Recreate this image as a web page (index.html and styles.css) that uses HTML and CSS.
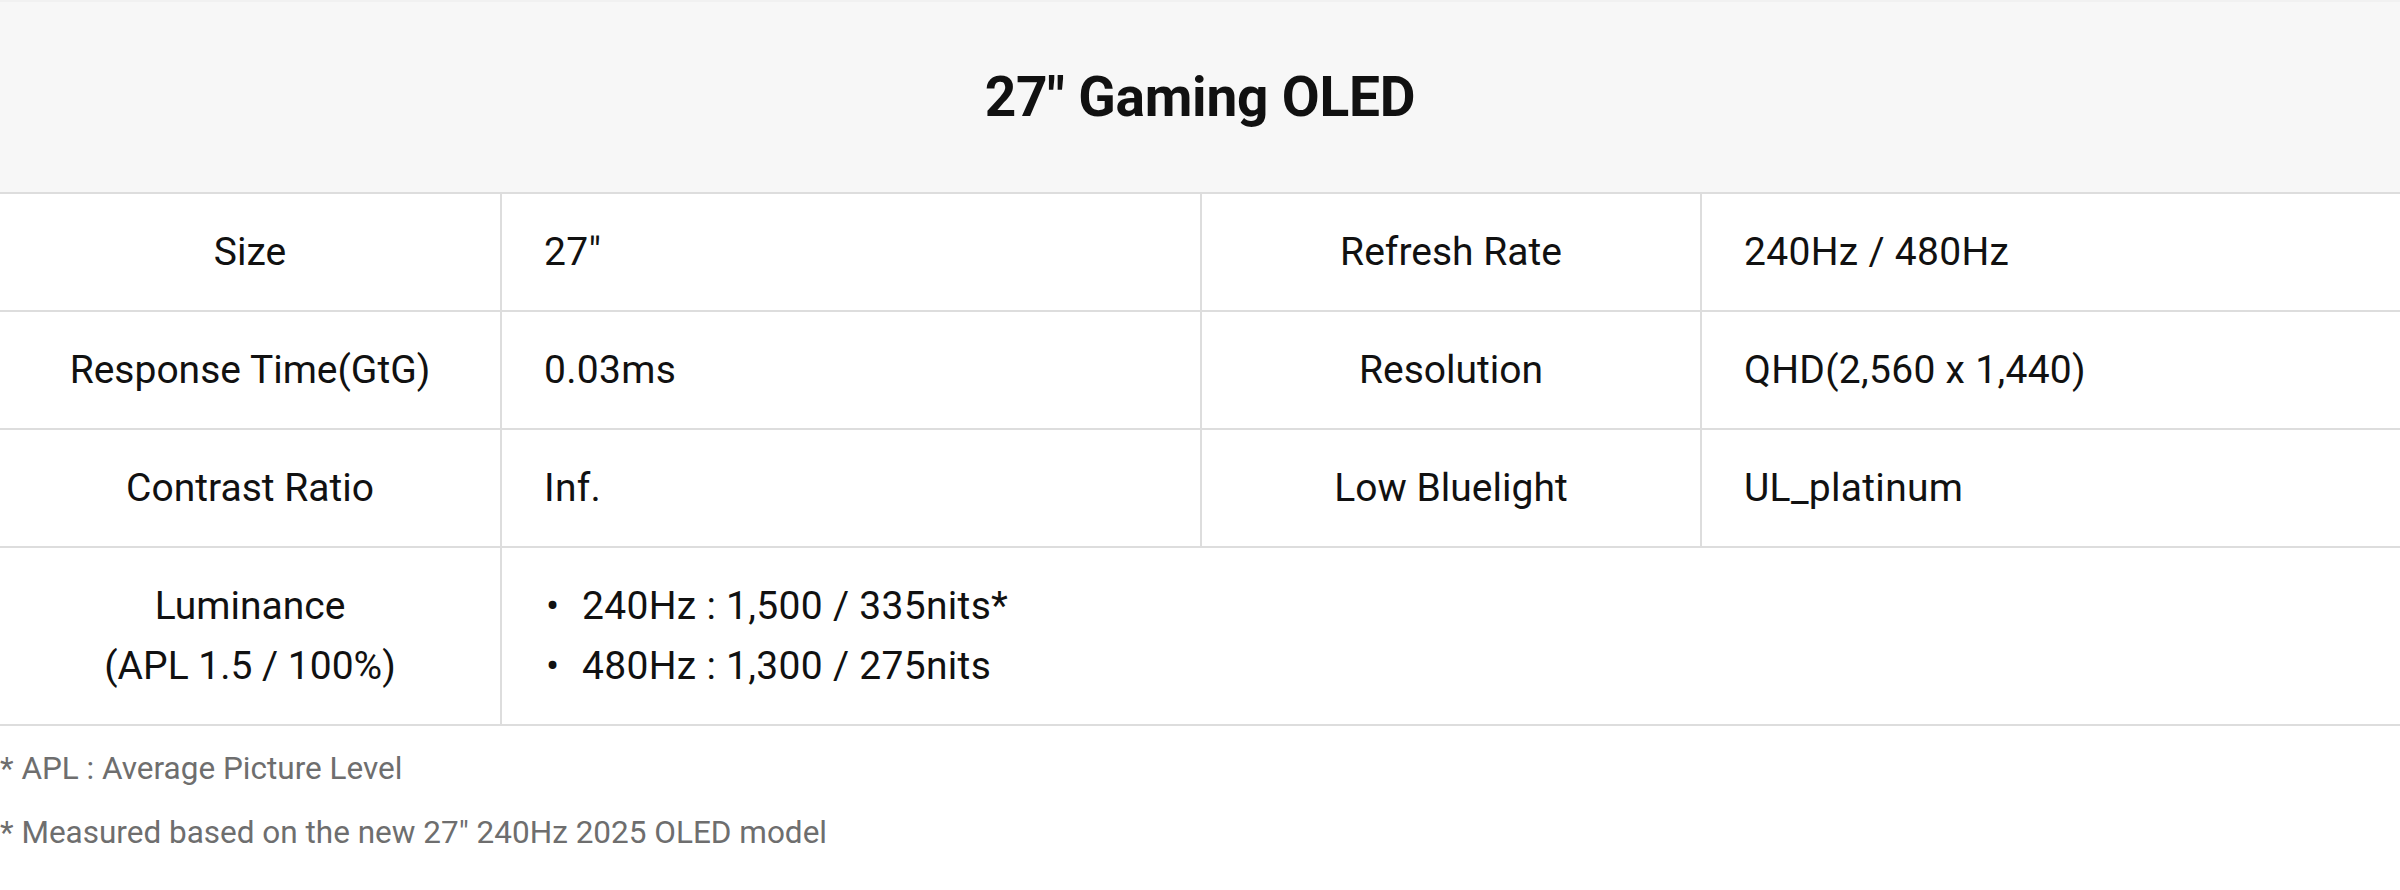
FILE: index.html
```html
<!DOCTYPE html>
<html lang="en">
<head>
<meta charset="utf-8">
<title>27" Gaming OLED</title>
<link rel="stylesheet" href="styles.css">
</head>
<body>
<div class="spec">
  <div class="spec-head">
    <h2 class="spec-title">27" Gaming OLED</h2>
  </div>
  <div class="spec-grid">
    <div class="cell label">Size</div>
    <div class="cell value">27"</div>
    <div class="cell label">Refresh Rate</div>
    <div class="cell value">240Hz / 480Hz</div>

    <div class="cell label">Response Time(GtG)</div>
    <div class="cell value">0.03ms</div>
    <div class="cell label">Resolution</div>
    <div class="cell value">QHD(2,560 x 1,440)</div>

    <div class="cell label">Contrast Ratio</div>
    <div class="cell value">Inf.</div>
    <div class="cell label">Low Bluelight</div>
    <div class="cell value">UL_platinum</div>

    <div class="cell label">Luminance<br>(APL 1.5 / 100%)</div>
    <div class="cell value wide">
      <ul class="bullets">
        <li>240Hz : 1,500 / 335nits*</li>
        <li>480Hz : 1,300 / 275nits</li>
      </ul>
    </div>
  </div>
  <div class="notes">
    <p class="note">* APL : Average Picture Level</p>
    <p class="note">* Measured based on the new 27" 240Hz 2025 OLED model</p>
  </div>
</div>
</body>
</html>
```

FILE: styles.css
```css
html, body {
  margin: 0;
  padding: 0;
  background: #ffffff;
}

body {
  font-family: Roboto, "Liberation Sans", Arial, sans-serif;
  color: #111111;
}

.spec {
  width: 2400px;
}

.spec-head {
  height: 190px;
  background: #f7f7f7;
  border-top: 2px solid #f1f1f1;
  border-bottom: 2px solid #dddddd;
  display: flex;
  align-items: center;
  justify-content: center;
}

.spec-title {
  margin: 0;
  font-size: 55px;
  font-weight: 700;
  line-height: 1;
  color: #111111;
  letter-spacing: -0.2px;
}

.spec-grid {
  display: grid;
  grid-template-columns: 500px 700px 500px 700px;
}

.cell {
  font-size: 39px;
  line-height: 60px;
  padding: 28px 0;
  border-bottom: 2px solid #dddddd;
}

.cell + .cell {
  border-left: 2px solid #dddddd;
}

.label {
  text-align: center;
}

.spec-grid .label:nth-child(4n+1) {
  border-left: none;
}

.value {
  padding-left: 42px;
  text-align: left;
  letter-spacing: 0.3px;
}

.wide {
  grid-column: 2 / 5;
}

.bullets {
  list-style: none;
  margin: 0;
  padding: 0;
}

.bullets li {
  display: flex;
}

.bullets li::before {
  content: "\2022";
  width: 38px;
  flex: 0 0 38px;
  padding-left: 2px;
  box-sizing: border-box;
}

.notes {
  padding-top: 1px;
}

.note {
  margin: 20px 0 0;
  font-size: 31.5px;
  line-height: 44px;
  color: #6e6e6e;
}
```
